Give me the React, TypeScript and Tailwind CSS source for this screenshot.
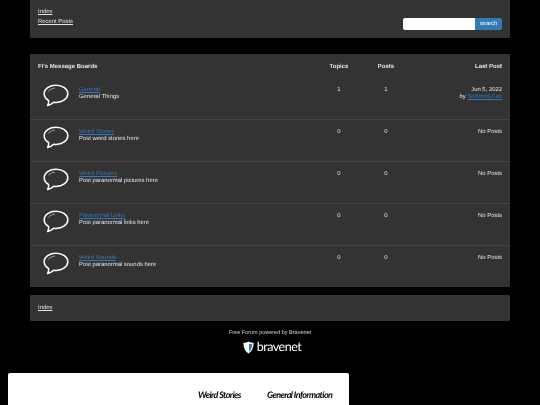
const boards = [
  { t: "General", d: "General Things", n: "1", last: true },
  { t: "Weird Stories", d: "Post weird stories here", n: "0" },
  { t: "Weird Pictures", d: "Post paranormal pictures here", n: "0" },
  { t: "Paranormal Links", d: "Post paranormal links here", n: "0" },
  { t: "Weird Sounds", d: "Post paranormal sounds here", n: "0" },
];

function Bubble() {
  return (
    <svg width="26" height="24" viewBox="0 0 26 24" fill="none" className="text-white">
      <path
        d="M13 1.2C6.6 1.2 1.200 4.600 1.200 9.800c0 3 1.800 5.300 4.400 6.700.3 1.600-.2 3.400-1 5.100 2.400-.6 4.600-2 6-3.400.8.1 1.600.2 2.400.2 6.400 0 11.800-3.600 11.800-8.600S19.400 1.200 13 1.200Z"
        stroke="currentColor"
        strokeWidth="1.5"
        strokeLinejoin="round"
      />
      <path d="M5.500 7.200C6.800 5.400 9 4.400 11.500 4.200" stroke="#bbbbbb" strokeWidth="0.8" strokeLinecap="round" />
    </svg>
  );
}

function Logo() {
  return (
    <div className="flex items-center gap-[3px] h-[14px] ml-[4px]">
      <svg width="11" height="13" viewBox="0 0 12 14">
        <path d="M6 .5C4 1.600 2.200 1.900.5 1.900c0 5 1.600 9.500 5.500 11.600C9.900 11.400 11.500 6.900 11.500 1.900 9.800 1.900 8 1.600 6 .5Z" fill="#ffffff" />
        <path d="M6.600 3C8 3.400 9 3.500 10 3.500c-.1 3.400-1.200 6.400-3.400 8Z" fill="#2f79bd" />
      </svg>
      <span className="text-[12.500px] leading-none text-white font-['Lato',sans-serif] tracking-[-0.5px]">bravenet</span>
    </div>
  );
}

export default function App() {
  return (
    <div className="w-[540px] h-[405px] overflow-hidden bg-black font-['Liberation_Sans',Arial,sans-serif] text-[5.900px] leading-[7px] text-[#e6e6e6] [text-rendering:geometricPrecision] blur-[0.2px]">
      <div className="mx-[30px] w-[480px] h-[38px] bg-[#333333] rounded-b-[1px] flex justify-between pl-2 pr-2 pt-[8.500px]">
        <div className="flex flex-col gap-[3px]">
          <a className="underline">Index</a>
          <a className="underline">Recent Posts</a>
        </div>
        <div className="flex mt-[9px] h-[12.500px]">
          <div className="w-[72px] bg-white rounded-l-[2px]" />
          <div className="w-[27px] bg-[#337ab7] rounded-r-[2px] text-white flex items-center justify-center pt-[1px]">search</div>
        </div>
      </div>

      <div className="mx-[30px] mt-[16px] w-[480px] h-[233px] bg-[#333333] rounded-[1px] flex flex-col">
        <div className="h-[24px] shrink-0 flex items-start pt-[9.500px] px-2 font-bold text-[6px]">
          <div className="flex-1">Fi's Message Boards</div>
          <div className="w-[47px] text-center">Topics</div>
          <div className="w-[47px] text-center">Posts</div>
          <div className="w-[92.500px] text-right">Last Post</div>
        </div>
        {boards.map((b, i) => (
          <div key={b.t} className={`h-[42px] shrink-0 flex items-start px-2 ${i < 4 ? "border-b border-[#444444]" : ""}`}>
            <div className="w-[41px] pl-[5px] pt-[6px] shrink-0">
              <Bubble />
            </div>
            <div className="flex-1 pt-[9px] flex flex-col">
              <a className="underline text-[#337ab7]">{b.t}</a>
              <span>{b.d}</span>
            </div>
            <div className="w-[47px] text-center pt-[9px]">{b.n}</div>
            <div className="w-[47px] text-center pt-[9px]">{b.n}</div>
            <div className="w-[92.500px] text-right pt-[9px]">
              {b.last ? (
                <>
                  <div>Jun 5, 2022</div>
                  <div>
                    by <a className="underline text-[#337ab7]">SoWeird-Fan</a>
                  </div>
                </>
              ) : (
                "No Posts"
              )}
            </div>
          </div>
        ))}
      </div>

      <div className="mx-[30px] mt-[8px] w-[480px] h-[26px] bg-[#333333] rounded-[1px] flex items-center px-2 pt-[1px]">
        <a className="underline">Index</a>
      </div>

      <div className="mt-[9px] flex flex-col items-center text-[#d4d4d4] text-[5.500px]">
        <div>Free Forum powered by Bravenet</div>
        <div className="mt-[3px]">
          <Logo />
        </div>
      </div>

      <div className="ml-[8px] mt-[19px] w-[341px] h-[40px] bg-white rounded-t-[2px] flex pt-[15.500px] pl-[190px] gap-[26px] text-black text-[9px] leading-[11px] italic font-['Lato',sans-serif] font-bold tracking-[-0.58px] whitespace-nowrap">
        <span>Weird Stories</span>
        <span>General Information</span>
      </div>
    </div>
  );
}
